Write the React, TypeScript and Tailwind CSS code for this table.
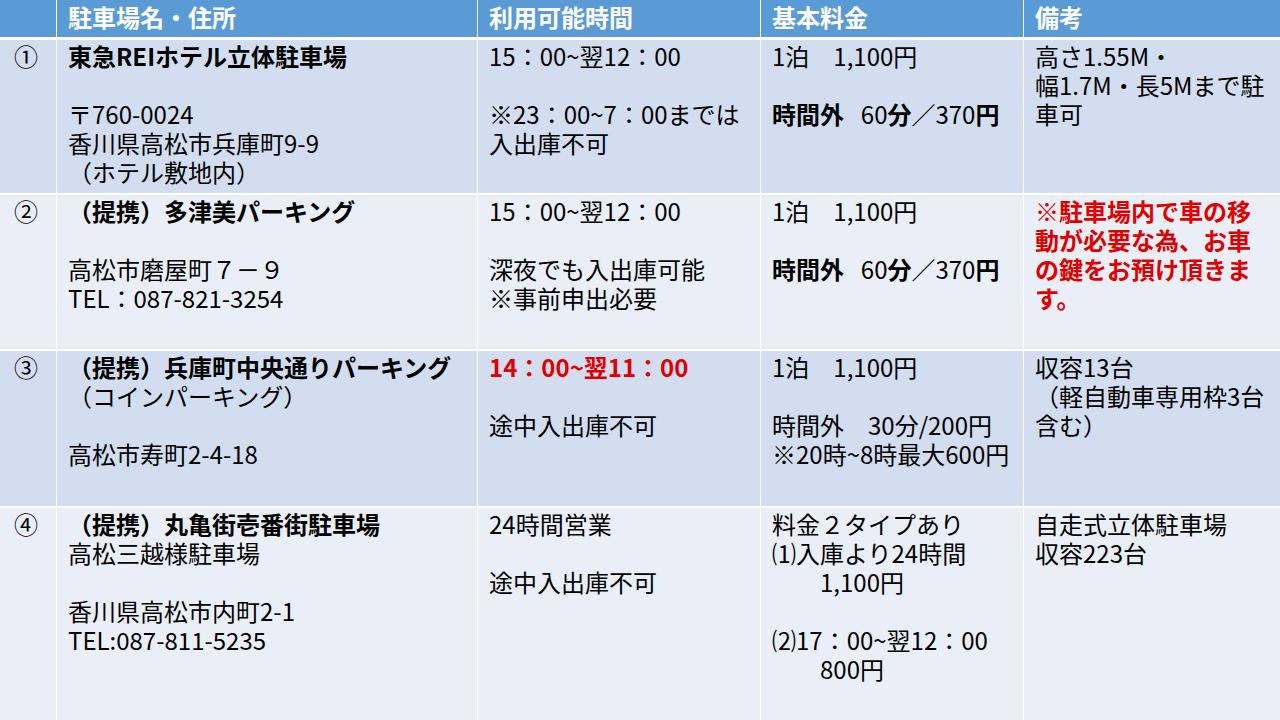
import type { ReactNode } from "react";

type Cell = ReactNode[];

const R = ({ children }: { children: ReactNode }) => (
  <span className="font-bold text-[#e00000]">{children}</span>
);
const B = ({ children }: { children: ReactNode }) => <span className="font-bold">{children}</span>;

const headers = ["", "駐車場名・住所", "利用可能時間", "基本料金", "備考"];

const extra = <><B>時間外</B>{"\u2002\u2009"}60<B>分</B>／370<B>円</B></>;

const rows: { bg: string; h: string; cells: Cell[] }[] = [
  {
    bg: "bg-[#d2deef]",
    h: "h-[153px]",
    cells: [
      ["①"],
      [<B>東急REIホテル立体駐車場</B>, "", "〒760-0024", "香川県高松市兵庫町9-9", "（ホテル敷地内）"],
      ["15：00~翌12：00", "", "※23：00~7：00までは", "入出庫不可"],
      ["1泊　1,100円", "", extra],
      ["高さ1.55M・", "幅1.7M・長5Mまで駐", "車可"],
    ],
  },
  {
    bg: "bg-[#eaeff7]",
    h: "h-[154px]",
    cells: [
      ["②"],
      [<B>（提携）多津美パーキング</B>, "", "高松市磨屋町７－９", "TEL：087-821-3254"],
      ["15：00~翌12：00", "", "深夜でも入出庫可能", "※事前申出必要"],
      ["1泊　1,100円", "", extra],
      [<R>※駐車場内で車の移</R>, <R>動が必要な為、お車</R>, <R>の鍵をお預け頂きま</R>, <R>す。</R>],
    ],
  },
  {
    bg: "bg-[#d2deef]",
    h: "h-[155px]",
    cells: [
      ["③"],
      [<B>（提携）兵庫町中央通りパーキング</B>, "（コインパーキング）", "", "高松市寿町2-4-18"],
      [<R>14：00~翌11：00</R>, "", "途中入出庫不可"],
      ["1泊　1,100円", "", "時間外　30分/200円", "※20時~8時最大600円"],
      ["収容13台", "（軽自動車専用枠3台", "含む）"],
    ],
  },
  {
    bg: "bg-[#eaeff7]",
    h: "flex-1",
    cells: [
      ["④"],
      [<B>（提携）丸亀街壱番街駐車場</B>, "高松三越様駐車場", "", "香川県高松市内町2-1", "TEL:087-811-5235"],
      ["24時間営業", "", "途中入出庫不可"],
      ["料金２タイプあり", "⑴入庫より24時間", "　　1,100円", "", "⑵17：00~翌12：00", "　　800円"],
      ["自走式立体駐車場", "収容223台"],
    ],
  },
];

const cols = "grid grid-cols-[56px_420px_282px_262px_1fr] gap-x-px";

export default function App() {
  return (
    <div
      className="w-[1280px] h-[720px] bg-white flex flex-col gap-y-[2px] overflow-hidden text-black text-[24px] leading-[29px]"
      style={{ fontFamily: '"Noto Sans CJK JP", "Noto Sans", sans-serif' }}
    >
      <div className={`${cols} h-[37px] mb-px`}>
        {headers.map((h, i) => (
          <div key={i} className="bg-[#5b9bd5] text-white font-bold pl-[11px] pt-[2px]">
            {h}
          </div>
        ))}
      </div>
      {rows.map((row, ri) => (
        <div key={ri} className={`${cols} ${row.h}`}>
          {row.cells.map((cell, ci) => (
            <div
              key={ci}
              className={`${row.bg} pt-[1px] whitespace-pre ${ci === 0 ? "text-center pr-[4px]" : "pl-[11px]"}`}
            >
              {cell.map((line, li) => (
                <div key={li} className="h-[29px]">
                  {line === "" ? "\u00a0" : line}
                </div>
              ))}
            </div>
          ))}
        </div>
      ))}
    </div>
  );
}
